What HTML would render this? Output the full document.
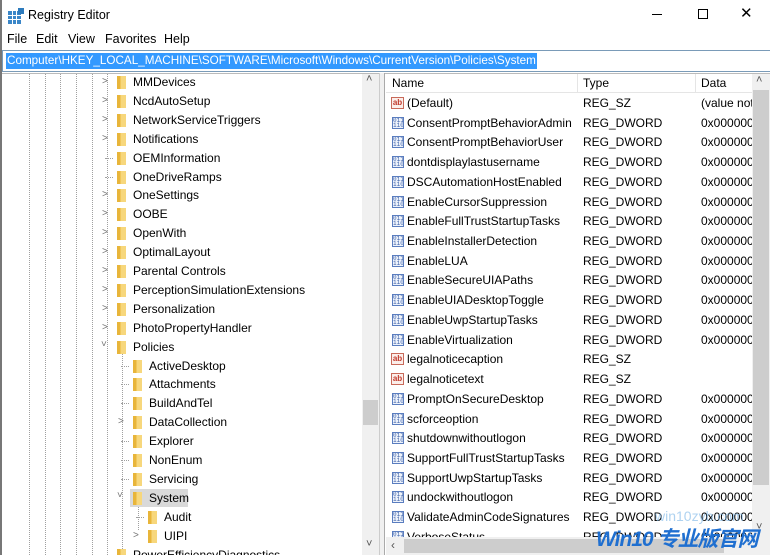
<!DOCTYPE html>
<html style="overflow:hidden;width:770px;height:555px"><head><style>
*{margin:0;padding:0;box-sizing:border-box}
body{width:770px;height:555px;overflow:hidden;background:#fff;font-family:"Liberation Sans",sans-serif;font-size:12px;color:#000;position:relative}
.a{position:absolute;white-space:nowrap}
.vl{position:absolute;width:0;border-left:1px dotted #a0a0a0}
.f{position:absolute;width:9px;height:13px;background:linear-gradient(90deg,#e8b53a 0,#e8b53a 40%,#f7d77c 40%);}
.ch{position:absolute;font-size:10px;color:#777}
.ic{position:absolute;width:12px;height:12px;border:1px solid #5a7dbf;background:#eef3fb;font-size:6px;line-height:5px;color:#3a5fa8;font-family:"Liberation Mono",monospace;text-align:center;overflow:hidden}
.ab{position:absolute;width:13px;height:12px;border:1px solid #c86a5a;background:#fbeeea;font-size:8px;line-height:10px;color:#c0392b;font-weight:bold;text-align:center}
</style></head><body>
<div class="a" style="left:0;top:0;width:2px;height:555px;background:#777"></div>
<svg class="a" style="left:8px;top:8px" width="16" height="16"><rect x="0" y="3" width="13" height="13" fill="#3a86c8"/><g stroke="#fff" stroke-width="1"><line x1="4.5" y1="3" x2="4.5" y2="16"/><line x1="8.5" y1="3" x2="8.5" y2="16"/><line x1="0" y1="7.5" x2="13" y2="7.5"/><line x1="0" y1="11.5" x2="13" y2="11.5"/></g><rect x="10" y="0" width="6" height="6" fill="#2d7bbd"/></svg>
<div class="a" style="left:28px;top:8px;font-size:12.5px">Registry Editor</div>
<div class="a" style="left:652px;top:14px;width:10px;height:1px;background:#000"></div>
<div class="a" style="left:698px;top:9px;width:10px;height:10px;border:1px solid #000"></div>
<div class="a" style="left:740px;top:4px;font-size:15px">✕</div>
<div class="a" style="left:7px;top:32px;font-size:12.5px">File</div>
<div class="a" style="left:36px;top:32px;font-size:12.5px">Edit</div>
<div class="a" style="left:68px;top:32px;font-size:12.5px">View</div>
<div class="a" style="left:105px;top:32px;font-size:12.5px">Favorites</div>
<div class="a" style="left:164px;top:32px;font-size:12.5px">Help</div>
<div class="a" style="left:2px;top:50px;width:768px;height:22px;border:1px solid #7a9bb8;border-right:none"></div>
<div class="a" style="left:6px;top:53px;height:16px;background:#3399ff;color:#fff;font-size:11.7px;padding:1px 1px;line-height:14px">Computer\HKEY_LOCAL_MACHINE\SOFTWARE\Microsoft\Windows\CurrentVersion\Policies\System</div>
<div class="a" style="left:2px;top:73px;width:768px;height:482px;border-top:1px solid #bbb"></div>
<div class="a" style="left:379px;top:73px;width:6px;height:482px;background:#f0f0f0;border-left:1px solid #ccc;border-right:1px solid #aaa"></div>
<div class="a" style="left:362px;top:74px;width:17px;height:481px;background:#f0f0f0"></div>
<div class="a" style="left:366px;top:73px;font-size:11px;color:#555">˄</div>
<div class="a" style="left:366px;top:538px;font-size:11px;color:#555">˅</div>
<div class="a" style="left:363px;top:400px;width:15px;height:25px;background:#cdcdcd"></div>
<div class="vl" style="left:29px;top:74px;height:481px"></div>
<div class="vl" style="left:45px;top:74px;height:481px"></div>
<div class="vl" style="left:60px;top:74px;height:481px"></div>
<div class="vl" style="left:76px;top:74px;height:481px"></div>
<div class="vl" style="left:92px;top:74px;height:481px"></div>
<div class="vl" style="left:107px;top:74px;height:481px"></div>
<div class="vl" style="left:122px;top:350px;height:205px"></div>
<div class="vl" style="left:138px;top:500px;height:30px"></div>
<div id="tree"></div>
<div class="a" style="left:386px;top:74px;width:366px;height:19px;border-bottom:1px solid #e5e5e5"></div>
<div class="a" style="left:392px;top:76px;font-size:12px">Name</div>
<div class="a" style="left:577px;top:74px;width:1px;height:19px;background:#e5e5e5"></div>
<div class="a" style="left:583px;top:76px;font-size:12px">Type</div>
<div class="a" style="left:695px;top:74px;width:1px;height:19px;background:#e5e5e5"></div>
<div class="a" style="left:701px;top:76px;font-size:12px">Data</div>
<div id="vals"></div>
<div class="a" style="left:752px;top:74px;width:18px;height:463px;background:#f0f0f0"></div>
<div class="a" style="left:756px;top:74px;font-size:11px;color:#555">˄</div>
<div class="a" style="left:753px;top:90px;width:16px;height:395px;background:#cdcdcd"></div>
<div class="a" style="left:756px;top:521px;font-size:11px;color:#555">˅</div>
<div class="a" style="left:386px;top:537px;width:384px;height:18px;background:#f0f0f0"></div>
<div class="a" style="left:391px;top:538px;font-size:12px;color:#555">‹</div>
<div class="a" style="left:404px;top:539px;width:320px;height:14px;background:#cdcdcd"></div>
<div class="a" style="left:596px;top:528px;font-size:21px;line-height:24px;font-style:italic;font-weight:bold;color:#1f6fd0;font-family:'Liberation Sans','Noto Sans CJK SC',sans-serif;letter-spacing:-1px">Win10 专业版官网</div>
<div class="a" style="left:655px;top:508px;font-size:14px;color:rgba(120,180,230,.6)">win10zyb.com</div>
<script>
var L=[["MMDevices",1,1],["NcdAutoSetup",1,1],["NetworkServiceTriggers",1,1],["Notifications",1,1],["OEMInformation",1,0],["OneDriveRamps",1,0],["OneSettings",1,1],["OOBE",1,1],["OpenWith",1,1],["OptimalLayout",1,1],["Parental Controls",1,1],["PerceptionSimulationExtensions",1,1],["Personalization",1,1],["PhotoPropertyHandler",1,1],["Policies",1,2],["ActiveDesktop",2,0],["Attachments",2,0],["BuildAndTel",2,0],["DataCollection",2,1],["Explorer",2,0],["NonEnum",2,0],["Servicing",2,0],["System",2,2],["Audit",3,0],["UIPI",3,1],["PowerEfficiencyDiagnostics",1,0]];
var h="";L.forEach(function(r,i){var y=75+i*18.9,lv=r[1],fx=lv==1?117:lv==2?133:148;
if(r[2]==1)h+='<div class="ch" style="left:'+(fx-15)+'px;top:'+(y+1)+'px">&gt;</div>';
else if(r[2]==2)h+='<div class="ch" style="left:'+(fx-16)+'px;top:'+(y-1)+'px">˅</div>';
else h+='<div class="a" style="left:'+(fx-12)+'px;top:'+(y+7)+'px;width:8px;border-top:1px dotted #a0a0a0"></div>';
if(r[0]=="System")h+='<div class="a" style="left:'+(fx-3)+'px;top:'+(y-2)+'px;width:58px;height:18px;background:#d9d9d9"></div>';
h+='<div class="f" style="left:'+fx+'px;top:'+(y+1)+'px"></div><div class="a" style="left:'+(fx+16)+'px;top:'+y+'px;font-size:12px">'+r[0]+'</div>';});
document.getElementById("tree").innerHTML=h;
var V=[["(Default)","REG_SZ","(value not"],["ConsentPromptBehaviorAdmin"],["ConsentPromptBehaviorUser"],["dontdisplaylastusername"],["DSCAutomationHostEnabled"],["EnableCursorSuppression"],["EnableFullTrustStartupTasks"],["EnableInstallerDetection"],["EnableLUA"],["EnableSecureUIAPaths"],["EnableUIADesktopToggle"],["EnableUwpStartupTasks"],["EnableVirtualization"],["legalnoticecaption","REG_SZ",""],["legalnoticetext","REG_SZ",""],["PromptOnSecureDesktop"],["scforceoption"],["shutdownwithoutlogon"],["SupportFullTrustStartupTasks"],["SupportUwpStartupTasks"],["undockwithoutlogon"],["ValidateAdminCodeSignatures"],["VerboseStatus"]];
h="";V.forEach(function(r,i){var y=96+i*19.72,sz=r[1]=="REG_SZ";
h+=sz?'<div class="ab" style="left:391px;top:'+(y+1)+'px">ab</div>':'<div class="ic" style="left:392px;top:'+(y+1)+'px">011<br>110</div>';
h+='<div class="a" style="left:407px;top:'+y+'px;font-size:12px">'+r[0]+'</div><div class="a" style="left:583px;top:'+y+'px;font-size:12px">'+(r[1]||"REG_DWORD")+'</div><div class="a" style="left:701px;top:'+y+'px;font-size:12px;width:51px;overflow:hidden">'+(r[2]!==undefined?r[2]:"0x000000")+'</div>';});
document.getElementById("vals").innerHTML=h;
</script>
</body></html>
